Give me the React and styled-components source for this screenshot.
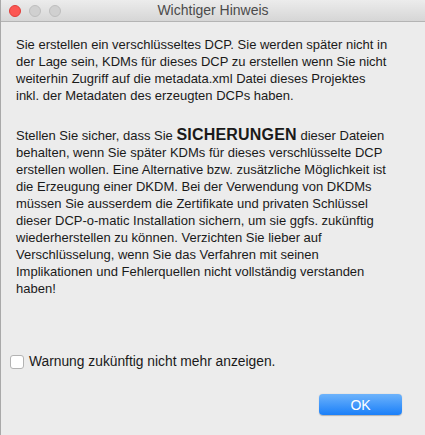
import React from "react";
import styled, { createGlobalStyle } from "styled-components";

const Global = createGlobalStyle`
  html, body { margin: 0; padding: 0; background: #ececec; }
  body { font-family: "Liberation Sans", Arial, sans-serif; }
`;

const Window = styled.div`
  width: 425px;
  height: 435px;
  box-sizing: border-box;
  display: flex;
  flex-direction: column;
  background: #ececec;
  border-left: 1px solid #a9a9a9;
  border-top-right-radius: 5px;
  overflow: hidden;
`;

const TitleBar = styled.div`
  height: 22px;
  flex: none;
  box-sizing: border-box;
  display: flex;
  align-items: center;
  position: relative;
  background: linear-gradient(#ececec, #d6d6d6);
  border-bottom: 1px solid #b4b4b4;
  padding-left: 8px;
  gap: 8px;
`;

const Light = styled.span`
  width: 12px;
  height: 12px;
  border-radius: 50%;
  box-sizing: border-box;
  background: ${(p) => (p.$red ? "#fc5753" : "#d0d0d0")};
  border: 1px solid ${(p) => (p.$red ? "#df3e3a" : "#bdbdbd")};
`;

const Title = styled.div`
  position: absolute;
  left: 0;
  right: 0;
  top: 0;
  line-height: 21px;
  text-align: center;
  font-size: 14px;
  color: #4b4b4b;
  pointer-events: none;
`;

const Content = styled.div`
  padding: 14px 0 0 15px;
  display: flex;
  flex-direction: column;
  color: #1a1a1a;
  font-size: 13px;
`;

const Para = styled.p`
  margin: 0;
  margin-top: ${(p) => p.$gap || 0}px;
  line-height: 17px;
  white-space: nowrap;
`;

const Strong = styled.b`
  font-size: 16px;
  font-weight: bold;
  line-height: 0;
  letter-spacing: 0.2px;
`;

const CheckRow = styled.label`
  display: flex;
  align-items: center;
  gap: 5px;
  margin: 56px 0 0 9px;
  height: 17px;
  font-size: 13.8px;
  color: #1a1a1a;
`;

const Box = styled.span`
  width: 14px;
  height: 14px;
  box-sizing: border-box;
  background: #fff;
  border: 1px solid #b3b3b3;
  border-radius: 3px;
`;

const ButtonRow = styled.div`
  display: flex;
  justify-content: flex-end;
  padding-right: 23px;
  margin-top: 24px;
`;

const Button = styled.button`
  width: 83px;
  height: 21px;
  border: none;
  border-radius: 4px;
  background: linear-gradient(#6db3fb, #1a7ff9);
  color: #fff;
  font-family: "Liberation Sans", Arial, sans-serif;
  font-size: 14px;
  padding: 0;
  box-shadow: 0 0.5px 1px rgba(0, 0, 0, 0.25);
`;

export default function App() {
  return (
    <>
      <Global />
      <Window>
        <TitleBar>
          <Light $red />
          <Light />
          <Light />
          <Title>Wichtiger Hinweis</Title>
        </TitleBar>
        <Content>
          <Para>
            Sie erstellen ein verschlüsseltes DCP. Sie werden später nicht in
            <br />
            der Lage sein, KDMs für dieses DCP zu erstellen wenn Sie nicht
            <br />
            weiterhin Zugriff auf die metadata.xml Datei dieses Projektes
            <br />
            inkl. der Metadaten des erzeugten DCPs haben.
          </Para>
          <Para $gap={23}>
            Stellen Sie sicher, dass Sie <Strong>SICHERUNGEN</Strong> dieser Dateien
            <br />
            behalten, wenn Sie später KDMs für dieses verschlüsselte DCP
            <br />
            erstellen wollen. Eine Alternative bzw. zusätzliche Möglichkeit ist
            <br />
            die Erzeugung einer DKDM. Bei der Verwendung von DKDMs
            <br />
            müssen Sie ausserdem die Zertifikate und privaten Schlüssel
            <br />
            dieser DCP-o-matic Installation sichern, um sie ggfs. zukünftig
            <br />
            wiederherstellen zu können. Verzichten Sie lieber auf
            <br />
            Verschlüsselung, wenn Sie das Verfahren mit seinen
            <br />
            Implikationen und Fehlerquellen nicht vollständig verstanden
            <br />
            haben!
          </Para>
        </Content>
        <CheckRow>
          <Box />
          Warnung zukünftig nicht mehr anzeigen.
        </CheckRow>
        <ButtonRow>
          <Button>OK</Button>
        </ButtonRow>
      </Window>
    </>
  );
}
